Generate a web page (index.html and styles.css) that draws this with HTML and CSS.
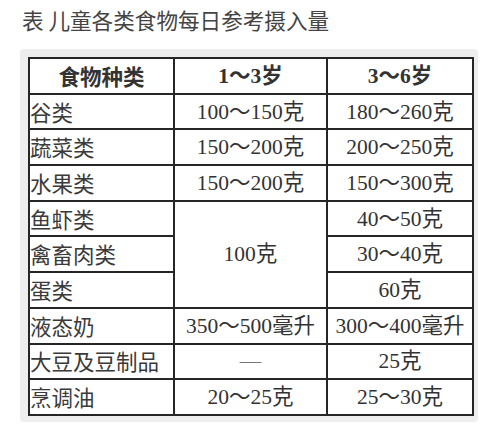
FILE: index.html
```html
<!DOCTYPE html>
<html lang="zh">
<head>
<meta charset="utf-8">
<link rel="stylesheet" href="styles.css">
</head>
<body>
<h1 class="title">表 儿童各类食物每日参考摄入量</h1>
<div class="panel">
  <table class="food">
    <colgroup>
      <col class="c1"><col class="c2"><col class="c3">
    </colgroup>
    <thead>
      <tr><th class="hname">食物种类</th><th>1～3岁</th><th>3～6岁</th></tr>
    </thead>
    <tbody>
      <tr><td class="name">谷类</td><td>100～150克</td><td>180～260克</td></tr>
      <tr><td class="name">蔬菜类</td><td>150～200克</td><td>200～250克</td></tr>
      <tr><td class="name">水果类</td><td>150～200克</td><td>150～300克</td></tr>
      <tr><td class="name">鱼虾类</td><td rowspan="3">100克</td><td>40～50克</td></tr>
      <tr><td class="name">禽畜肉类</td><td>30～40克</td></tr>
      <tr><td class="name">蛋类</td><td>60克</td></tr>
      <tr><td class="name">液态奶</td><td>350～500毫升</td><td>300～400毫升</td></tr>
      <tr><td class="name">大豆及豆制品</td><td class="dash">—</td><td>25克</td></tr>
      <tr><td class="name">烹调油</td><td>20～25克</td><td>25～30克</td></tr>
    </tbody>
  </table>
</div>
</body>
</html>
```
FILE: styles.css
```css
html, body {
  margin: 0;
  padding: 0;
  background: #ffffff;
}

.title {
  margin: 0;
  padding: 6px 0 0 22px;
  height: 43px;
  box-sizing: border-box;
  font-family: "Noto Sans CJK SC", "Noto Sans", sans-serif;
  font-weight: 400;
  font-size: 21.6px;
  line-height: 28px;
  color: #444444;
}

.panel {
  margin: 6px 0 0 20px;
  width: 458px;
  box-sizing: border-box;
  padding: 8px 6px 6px 8px;
  background: #eeeeee;
  border-radius: 4px;
}

.food {
  width: 444px;
  border-collapse: collapse;
  table-layout: fixed;
  background: #ffffff;
  color: #333333;
  font-family: "Liberation Serif", "Noto Sans CJK SC", serif;
  font-size: 21.5px;
}

.c1 { width: 145px; }
.c2 { width: 153px; }
.c3 { width: 146px; }

.food th,
.food td {
  border: 2px solid #262626;
  height: 33.7px;
  padding: 0;
  text-align: center;
  vertical-align: middle;
  line-height: 24px;
  white-space: nowrap;
}

.food th {
  font-weight: 700;
  font-family: "Liberation Serif", "Noto Sans CJK SC", serif;
}

.food th.hname {
  font-family: "Noto Sans CJK SC", sans-serif;
}

.food td.name {
  text-align: left;
  padding-left: 0;
  font-family: "Noto Sans CJK SC", sans-serif;
  font-weight: 400;
  color: #3a3a3a;
}

.food td.dash {
  color: #777777;
}
```
